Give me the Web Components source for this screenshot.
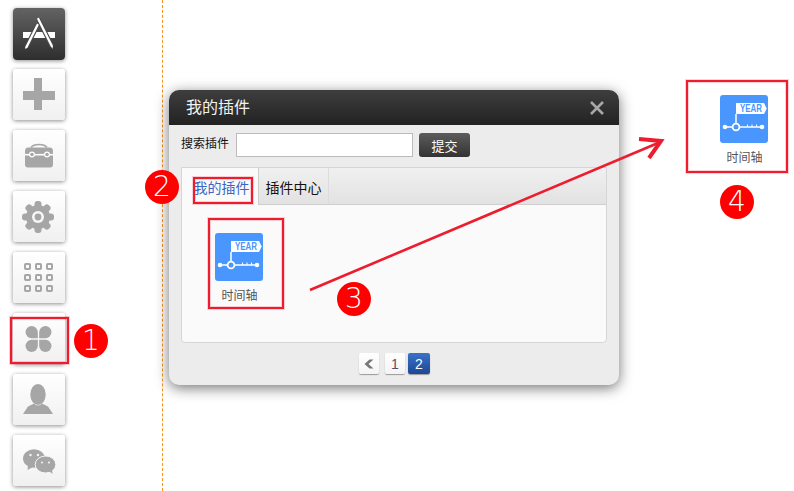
<!DOCTYPE html>
<html>
<head>
<meta charset="utf-8">
<title>插件</title>
<style>
    html, body { margin: 0; height: 100%; background: #fff; overflow: hidden; }
    body { font-family: "Noto Sans CJK SC", "Liberation Sans", sans-serif; }
</style>
</head>
<body>
<x-stage>
    <x-dock slot="dock">
        <x-dock-button icon="store" dark></x-dock-button>
        <x-dock-button icon="plus"></x-dock-button>
        <x-dock-button icon="toolbox"></x-dock-button>
        <x-dock-button icon="gear"></x-dock-button>
        <x-dock-button icon="grid"></x-dock-button>
        <x-dock-button icon="clover"></x-dock-button>
        <x-dock-button icon="person"></x-dock-button>
        <x-dock-button icon="wechat"></x-dock-button>
    </x-dock>
    <x-desk slot="desk">
        <x-dialog heading="我的插件"></x-dialog>
        <x-plugin-tile class="placed" style="left:557px;top:95px"></x-plugin-tile>
    </x-desk>
    <x-arrow slot="marks"></x-arrow>
    <x-mark slot="marks" box="10,317,59,47"></x-mark>
    <x-mark slot="marks" box="193,177,60,27"></x-mark>
    <x-mark slot="marks" box="208,218,76,91"></x-mark>
    <x-mark slot="marks" box="686,80,102,93"></x-mark>
    <x-badge slot="marks" at="91,341">1</x-badge>
    <x-badge slot="marks" at="162,187">2</x-badge>
    <x-badge slot="marks" at="354,299">3</x-badge>
    <x-badge slot="marks" at="737,202">4</x-badge>
</x-stage>

<script>
const DOCK_ICONS = {
    store: `
        <path d="M10 24h32v6h-32z" fill="#fff"/>
        <path d="M24.500 17l-11 22M25.300 11l13.500 27" stroke="#4a4a4a" stroke-width="4.600"/>
        <path d="M24.500 17l-11 22" stroke="#fff" stroke-width="2.300" stroke-linecap="round"/>
        <path d="M25.300 11l13.500 27" stroke="#fff" stroke-width="2.300" stroke-linecap="round"/>
        <path d="M12.500 38.500l-.3 2.500 2.300-1.500zM38 38.500l1.800 2.500-.3-3z" fill="#fff"/>`,
    plus: `<path d="M21 9h8v13h13v9h-13v10h-8v-10h-11v-9h11z" fill="#a6a6a6"/>`,
    toolbox: `
        <path d="M18 17.500c3-4 13-4 16 0" fill="none" stroke="#a6a6a6" stroke-width="1.600"/>
        <path d="M12 24v-2.500c0-2.500 1-4 3.500-4h21c2.500 0 3.500 1.500 3.500 4v2.500z" fill="#a6a6a6"/>
        <path d="M12 25.500h28v9c0 2-1 3-3 3h-22c-2 0-3-1-3-3z" fill="#a6a6a6"/>
        <path d="M12 24.500h28" stroke="#fff" stroke-width="1.200"/>
        <circle cx="19" cy="24.500" r="2.400" fill="#a6a6a6" stroke="#fff" stroke-width="1.200"/>
        <circle cx="34" cy="24.500" r="2.400" fill="#a6a6a6" stroke="#fff" stroke-width="1.200"/>`,
    gear: `
        <g fill="#a6a6a6" transform="translate(25 26)">
            <circle r="12"/>
            <rect x="-3.500" y="-16" width="7" height="32" rx="3"/>
            <rect x="-3.500" y="-16" width="7" height="32" rx="3" transform="rotate(45)"/>
            <rect x="-3.500" y="-16" width="7" height="32" rx="3" transform="rotate(90)"/>
            <rect x="-3.500" y="-16" width="7" height="32" rx="3" transform="rotate(135)"/>
            <circle r="6" fill="#f8f8f8"/>
            <circle r="3.400"/>
        </g>`,
    grid: `
        <g fill="none" stroke="#a6a6a6" stroke-width="2">
            <rect x="12" y="12" width="5" height="5" rx=".8"/><rect x="23" y="12" width="5" height="5" rx=".8"/><rect x="34" y="12" width="5" height="5" rx=".8"/>
            <rect x="12" y="23" width="5" height="5" rx=".8"/><rect x="23" y="23" width="5" height="5" rx=".8"/><rect x="34" y="23" width="5" height="5" rx=".8"/>
            <rect x="12" y="34" width="5" height="5" rx=".8"/><rect x="23" y="34" width="5" height="5" rx=".8"/><rect x="34" y="34" width="5" height="5" rx=".8"/>
        </g>`,
    clover: `
        <g fill="#a6a6a6" transform="translate(25.500 26)">
            <path d="M-.7-.7H-7A6.300 6.300 0 0 1-13-7A6.300 6.300 0 0 1-7-13A6.300 6.300 0 0 1-.7-7Z"/>
            <path transform="scale(-1 1)" d="M-.7-.7H-7A6.300 6.300 0 0 1-13-7A6.300 6.300 0 0 1-7-13A6.300 6.300 0 0 1-.7-7Z"/>
            <path transform="scale(1 -1)" d="M-.7-.7H-7A6.300 6.300 0 0 1-13-7A6.300 6.300 0 0 1-7-13A6.300 6.300 0 0 1-.7-7Z"/>
            <path transform="scale(-1 -1)" d="M-.7-.7H-7A6.300 6.300 0 0 1-13-7A6.300 6.300 0 0 1-7-13A6.300 6.300 0 0 1-.7-7Z"/>
        </g>`,
    person: `
        <ellipse cx="25" cy="20.500" rx="7.700" ry="10.500" fill="#a6a6a6"/>
        <path d="M10 40l5-7.500 6-3c2 2.500 6 2.500 8 0l6 3 5 7.500z" fill="#a6a6a6"/>`,
    wechat: `
        <ellipse cx="21" cy="23.500" rx="11" ry="9.300" fill="#a6a6a6"/>
        <path d="M15 30l-.5 5 5.500-3z" fill="#a6a6a6"/>
        <ellipse cx="32.500" cy="29.500" rx="10.300" ry="8.500" fill="#a6a6a6" stroke="#f6f6f6" stroke-width="1"/>
        <path d="M36 36l3.500 3-.5-4.500z" fill="#a6a6a6"/>
        <circle cx="17.500" cy="20" r="1.200" fill="#f6f6f6"/><circle cx="25" cy="20" r="1.200" fill="#f6f6f6"/>
        <circle cx="29" cy="27.500" r="1" fill="#f6f6f6"/><circle cx="36" cy="27.500" r="1" fill="#f6f6f6"/>`
};

class Stage extends HTMLElement {
    constructor () {
        super();
        this.attachShadow({mode: 'open'}).innerHTML = `
            <style>
                :host { display: flex; position: relative; width: 794px; height: 491px; overflow: hidden; }
                .marks { position: absolute; inset: 0; }
            </style>
            <slot name="dock"></slot>
            <slot name="desk"></slot>
            <div class="marks"><slot name="marks"></slot></div>
        `;
    }
}

class Dock extends HTMLElement {
    constructor () {
        super();
        this.attachShadow({mode: 'open'}).innerHTML = `
            <style>
                :host { display: flex; flex-direction: column; box-sizing: border-box; width: 162px; padding: 8px 0 0 13px; flex: none; }
            </style>
            <slot></slot>
        `;
    }
}

class DockButton extends HTMLElement {
    constructor () {
        super();
        this.attachShadow({mode: 'open'});
    }

    connectedCallback () {
        const icon = DOCK_ICONS[this.getAttribute('icon')];
        this.shadowRoot.innerHTML = `
            <style>
                :host { display: block; width: 52px; height: 51px; margin-bottom: 10px; border-radius: 3px;
                    background: linear-gradient(#fff, #f0f0f0); box-shadow: 0 1px 4px rgba(0,0,0,.45); }
                :host([dark]) { height: 52px; margin-bottom: 9px; border-radius: 4px; background: linear-gradient(#636363, #2e2e2e); }
                svg { display: block; width: 52px; height: 52px; }
            </style>
            <svg viewBox="0 0 52 52">${icon}</svg>
        `;
    }
}

class Desk extends HTMLElement {
    constructor () {
        super();
        this.attachShadow({mode: 'open'}).innerHTML = `
            <style>
                :host { display: block; position: relative; flex: 1; border-left: 1px dashed #f7931e; }
                ::slotted(.placed) { position: absolute; }
            </style>
            <slot></slot>
        `;
    }
}

class PluginTile extends HTMLElement {
    constructor () {
        super();
        this.attachShadow({mode: 'open'}).innerHTML = `
            <style>
                :host { display: flex; flex-direction: column; align-items: center; width: 48px; color: #555; font-size: 12px; line-height: 16px; }
                svg { display: block; width: 48px; height: 48px; margin-bottom: 6px; }
                text { font: bold 10px "Liberation Sans", sans-serif; fill: #4a96ff; }
                span { white-space: nowrap; padding-left: 1px; }
            </style>
            <svg viewBox="0 0 48 48">
                <rect width="48" height="48" rx="3" fill="#4a96ff"/>
                <path d="M16 8h28l2.700 5.500-2.700 5.500h-28z" fill="#fff"/>
                <path d="M16 19v9" stroke="#fff" stroke-width="1.500"/>
                <path d="M5 32h37" stroke="#fff" stroke-width="1.300"/>
                <path d="M27.500 29.500v2.500M32 29.500v2.500M36.500 29.500v2.500" stroke="#fff" stroke-width="1"/>
                <circle cx="5" cy="32" r="2.300" fill="#fff"/>
                <circle cx="42" cy="32" r="2.300" fill="#fff"/>
                <circle cx="16" cy="32" r="3.400" fill="#4a96ff" stroke="#fff" stroke-width="1.800"/>
                <text x="20" y="17" textLength="22" lengthAdjust="spacingAndGlyphs">YEAR</text>
            </svg>
            <span>时间轴</span>
        `;
    }
}

class Dialog extends HTMLElement {
    constructor () {
        super();
        this.attachShadow({mode: 'open'});
    }

    connectedCallback () {
        this.shadowRoot.innerHTML = `
            <style>
                :host { display: flex; flex-direction: column; position: absolute; left: 6px; top: 90px; box-sizing: border-box; width: 450px; height: 295px;
                    border-radius: 10px; background: #ececec; box-shadow: 0 3px 14px rgba(0,0,0,.55); color: #111; }
                header { display: flex; align-items: center; justify-content: space-between; box-sizing: border-box; height: 35px; padding: 0 14px 3px 17px; flex: none;
                    border-radius: 10px 10px 0 0; background: linear-gradient(#3e3e3e, #222); color: #f2f2f2; font-size: 16px; }
                header svg { display: block; width: 16px; height: 16px; margin-top: 3px; }
                .search { display: flex; align-items: center; height: 24px; margin: 8px 0 0 12px; font-size: 12px; }
                label { width: 55px; margin-top: -5px; flex: none; }
                input { box-sizing: border-box; width: 177px; height: 24px; margin: 0; border: 1px solid #bbb; background: #fff; }
                button { width: 51px; height: 24px; margin-left: 6px; padding: 0; border: 0; border-radius: 3px; background: linear-gradient(#5c5c5c, #333); color: #fff; font: inherit; font-size: 13px; }
                .panel { box-sizing: border-box; height: 176px; margin: 10px 12px 0 12px; border: 1px solid #d6d6d6; border-radius: 0 0 4px 4px; background: #fafafa; }
                nav { display: flex; height: 37px; box-sizing: border-box; border-bottom: 1px solid #cfcfcf; background: linear-gradient(#f0f0f0, #e2e2e2); font-size: 14px; line-height: 38px; }
                nav a { text-align: center; border-right: 1px solid #dcdcdc; white-space: nowrap; }
                nav a.on { width: 73px; height: 37px; padding-left: 3px; background: #fafafa; color: #3a66c4; border-right-color: #ccc; }
                nav a.off { width: 69px; color: #111; }
                .tiles { padding: 28px 0 0 33px; }
                .pager { display: flex; justify-content: center; align-items: flex-start; gap: 3px; margin-top: 10px; padding-left: 1px; font: 14px "Liberation Sans", sans-serif; }
                .pager a { display: flex; align-items: center; justify-content: center; box-sizing: border-box; width: 20px; height: 21px; border-radius: 2px; background: linear-gradient(#fff, #f4f4f4); box-shadow: 0 1px 1px rgba(0,0,0,.35); color: #5a4f6a; }
                .pager a.back { margin-right: 3px; }
                .pager a.cur { width: 22px; background: linear-gradient(#3a72c8, #1d4796); color: #fff; }
                .pager svg { width: 12px; height: 12px; }
            </style>
            <header>
                <span>${this.getAttribute('heading')}</span>
                <svg viewBox="0 0 16 16"><path d="M2 2l12 12M14 2l-12 12" stroke="#a8a8a8" stroke-width="2.500"/></svg>
            </header>
            <div class="search">
                <label>搜索插件</label>
                <input type="text">
                <button>提交</button>
            </div>
            <div class="panel">
                <nav><a class="on">我的插件</a><a class="off">插件中心</a></nav>
                <div class="tiles"><x-plugin-tile></x-plugin-tile></div>
            </div>
            <div class="pager">
                <a class="back"><svg viewBox="0 0 12 12"><path d="M6.500 1.500l-5 4.500 5 4.500h4l-5-4.500 5-4.500z" fill="#777"/></svg></a>
                <a>1</a>
                <a class="cur">2</a>
            </div>
        `;
    }
}

class Mark extends HTMLElement {
    constructor () {
        super();
        this.attachShadow({mode: 'open'}).innerHTML = `
            <style>
                :host { display: block; position: absolute; box-sizing: border-box; border: 2px solid #ed1c2e;
                    box-shadow: 0 0 0 1px rgba(237,28,46,.2), inset 0 0 0 1px rgba(237,28,46,.2); }
            </style>
        `;
    }

    connectedCallback () {
        const [x, y, w, h] = this.getAttribute('box').split(',');
        Object.assign(this.style, {left: x + 'px', top: y + 'px', width: w + 'px', height: h + 'px'});
    }
}

class Badge extends HTMLElement {
    constructor () {
        super();
        this.attachShadow({mode: 'open'}).innerHTML = `
            <style>
                :host { display: flex; align-items: center; justify-content: center; position: absolute; width: 34px; height: 34px; margin: -17px 0 0 -17px;
                    border-radius: 50%; background: #f00; color: #fff; font: 200 28px/34px "DejaVu Sans", sans-serif; }
            </style>
            <slot></slot>
        `;
    }

    connectedCallback () {
        const [x, y] = this.getAttribute('at').split(',');
        this.style.left = x + 'px';
        this.style.top = y + 'px';
    }
}

class Arrow extends HTMLElement {
    constructor () {
        super();
        this.attachShadow({mode: 'open'}).innerHTML = `
            <style>
                :host { display: block; position: absolute; inset: 0; }
                svg { display: block; width: 794px; height: 491px; }
            </style>
            <svg viewBox="0 0 794 491" fill="none" stroke="#ed1c2e">
                <path d="M310 290L658 143" stroke-width="2.600"/>
                <path d="M639 139L661 141L649 158" stroke-width="4"/>
            </svg>
        `;
    }
}

customElements.define('x-stage', Stage);
customElements.define('x-dock', Dock);
customElements.define('x-dock-button', DockButton);
customElements.define('x-desk', Desk);
customElements.define('x-plugin-tile', PluginTile);
customElements.define('x-dialog', Dialog);
customElements.define('x-mark', Mark);
customElements.define('x-badge', Badge);
customElements.define('x-arrow', Arrow);
</script>
</body>
</html>
